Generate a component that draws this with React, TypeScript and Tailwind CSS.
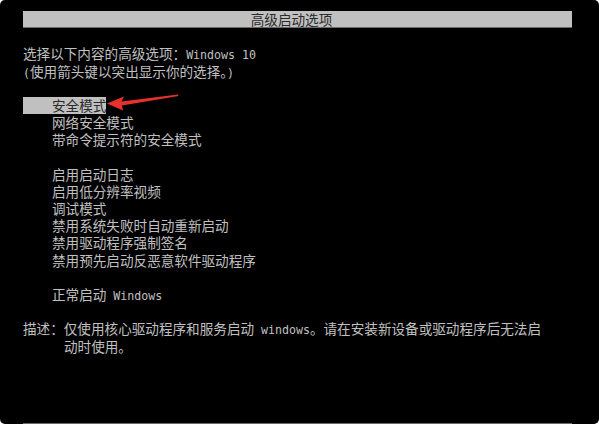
import React from "react";

const cjk = { fontFamily: '"Noto Sans CJK SC", "Noto Sans", sans-serif' };
const mono = { fontFamily: '"DejaVu Sans Mono", "Liberation Mono", monospace' };

function L({ children }: { children: React.ReactNode }) {
  return (
    <span className="text-[11.6px] leading-[17.2px]" style={mono}>
      {children}
    </span>
  );
}

function Line({ children, indent = false }: { children?: React.ReactNode; indent?: boolean }) {
  return (
    <div className={`h-[17.2px] leading-[17.2px] whitespace-pre ${indent ? "pl-[29px]" : ""}`}>
      {children}
    </div>
  );
}

export default function App() {
  return (
    <div className="bg-white w-[599px] h-[424px]">
      <div
        className="relative w-[599px] h-[424px] bg-black overflow-hidden rounded-[5px] text-[13.6px] text-[#c0c0c0] flex flex-col"
        style={cjk}
      >
        <div className="mt-[11px] ml-[23px] w-[549px] h-[17px] bg-[#c0c0c0] border-b border-[#6a6a6a] text-[#2a2a2a] flex items-center justify-center">
          <span className="pr-[12px] leading-[17px] text-[13.6px]">高级启动选项</span>
        </div>

        <div className="mt-[17.4px] pl-[23px] flex flex-col">
          <Line>
            选择以下内容的高级选项：<L>Windows 10</L>
          </Line>
          <Line>
            <L>(</L>使用箭头键以突出显示你的选择。<L>)</L>
          </Line>
          <Line />
          <div className="h-[17.2px] leading-[17.2px]">
            <span className="inline-block h-[17.2px] pl-[29px] bg-[#c0c0c0] text-[#2a2a2a]">安全模式</span>
          </div>
          <Line indent>网络安全模式</Line>
          <Line indent>带命令提示符的安全模式</Line>
          <Line />
          <Line indent>启用启动日志</Line>
          <Line indent>启用低分辨率视频</Line>
          <Line indent>调试模式</Line>
          <Line indent>禁用系统失败时自动重新启动</Line>
          <Line indent>禁用驱动程序强制签名</Line>
          <Line indent>禁用预先启动反恶意软件驱动程序</Line>
          <Line />
          <Line indent>
            正常启动<L> Windows</L>
          </Line>
          <Line />
          <Line>
            描述：仅使用核心驱动程序和服务启动<L> windows</L>。请在安装新设备或驱动程序后无法启
          </Line>
          <div className="h-[17.2px] leading-[17.2px] pl-[41px]">动时使用。</div>
        </div>

        <div className="mt-[68px] ml-[23px] w-[549px] h-[17px] shrink-0 bg-[#c0c0c0] border-t border-[#6a6a6a]" />

        <svg
          className="absolute inset-0 pointer-events-none"
          width="599"
          height="424"
          viewBox="0 0 599 424"
        >
          <polygon
            points="107,103.5 124,96.5 121.5,101.5 178,94.5 178.5,96 122,105.5 123,110.5"
            fill="#e8302c"
          />
        </svg>
      </div>
    </div>
  );
}
